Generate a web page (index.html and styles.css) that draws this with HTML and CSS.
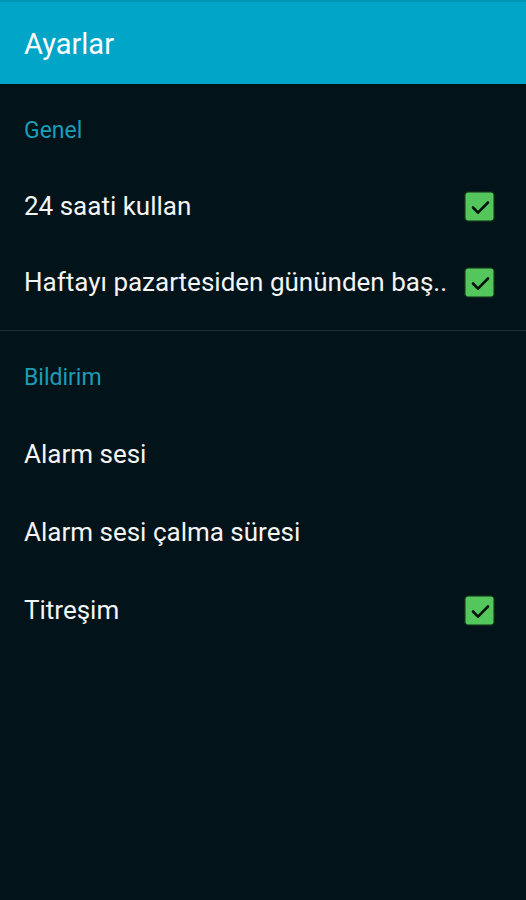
FILE: index.html
```html
<!DOCTYPE html>
<html lang="tr">
<head>
<meta charset="utf-8">
<title>Ayarlar</title>
<link rel="stylesheet" href="styles.css">
</head>
<body>
<header class="appbar">
  <h1 class="appbar-title">Ayarlar</h1>
</header>
<main class="prefs">
  <section class="group">
    <div class="category">Genel</div>
    <div class="row">
      <span class="label">24 saati kullan</span>
      <span class="check"><svg viewBox="0 0 31 31" width="31" height="31"><rect x="0.75" y="0.75" width="29.5" height="29.5" rx="3.5" fill="#53c75c" stroke="#0e2a17" stroke-width="1.5"/><path d="M9 16.5l5 5.2 10-10.2" fill="none" stroke="#06120b" stroke-width="2.6" stroke-linecap="round" stroke-linejoin="round"/></svg></span>
    </div>
    <div class="row">
      <span class="label">Haftayı pazartesiden gününden baş..</span>
      <span class="check"><svg viewBox="0 0 31 31" width="31" height="31"><rect x="0.75" y="0.75" width="29.5" height="29.5" rx="3.5" fill="#53c75c" stroke="#0e2a17" stroke-width="1.5"/><path d="M9 16.5l5 5.2 10-10.2" fill="none" stroke="#06120b" stroke-width="2.6" stroke-linecap="round" stroke-linejoin="round"/></svg></span>
    </div>
  </section>
  <div class="divider"></div>
  <section class="group group-b">
    <div class="category">Bildirim</div>
    <div class="row">
      <span class="label">Alarm sesi</span>
    </div>
    <div class="row">
      <span class="label">Alarm sesi çalma süresi</span>
    </div>
    <div class="row">
      <span class="label">Titreşim</span>
      <span class="check"><svg viewBox="0 0 31 31" width="31" height="31"><rect x="0.75" y="0.75" width="29.5" height="29.5" rx="3.5" fill="#53c75c" stroke="#0e2a17" stroke-width="1.5"/><path d="M9 16.5l5 5.2 10-10.2" fill="none" stroke="#06120b" stroke-width="2.6" stroke-linecap="round" stroke-linejoin="round"/></svg></span>
    </div>
  </section>
</main>
</body>
</html>
```
FILE: styles.css
```css
* { box-sizing: border-box; }
html, body {
  margin: 0;
  padding: 0;
  height: 100%;
}
body {
  background: #02131a;
  color: #f4f4f4;
  font-family: Roboto, "Noto Sans", sans-serif;
}
.appbar {
  height: 84px;
  background: #00a5c7;
  border-top: 2px solid #0094b4;
  display: flex;
  align-items: center;
  padding: 0 24px;
}
.appbar-title {
  margin: 0;
  font-size: 29px;
  font-weight: 400;
  color: #ffffff;
  line-height: 1;
  padding-top: 2px;
}
.prefs {
  display: flex;
  flex-direction: column;
}
.group {
  display: flex;
  flex-direction: column;
  padding-bottom: 10px;
}
.category {
  height: 84px;
  padding: 34px 24px 0;
  font-size: 23px;
  line-height: 26px;
  color: #1b9db8;
}
.row {
  height: 76px;
  display: flex;
  align-items: center;
  justify-content: space-between;
  padding: 0 31px 0 24px;
}
.group-b .row {
  height: 78px;
}
.label {
  font-size: 26px;
  line-height: 30px;
  white-space: nowrap;
}
.check {
  display: flex;
  width: 31px;
  height: 31px;
  flex: none;
}
.divider {
  height: 1px;
  background: #1f2e34;
}
```
